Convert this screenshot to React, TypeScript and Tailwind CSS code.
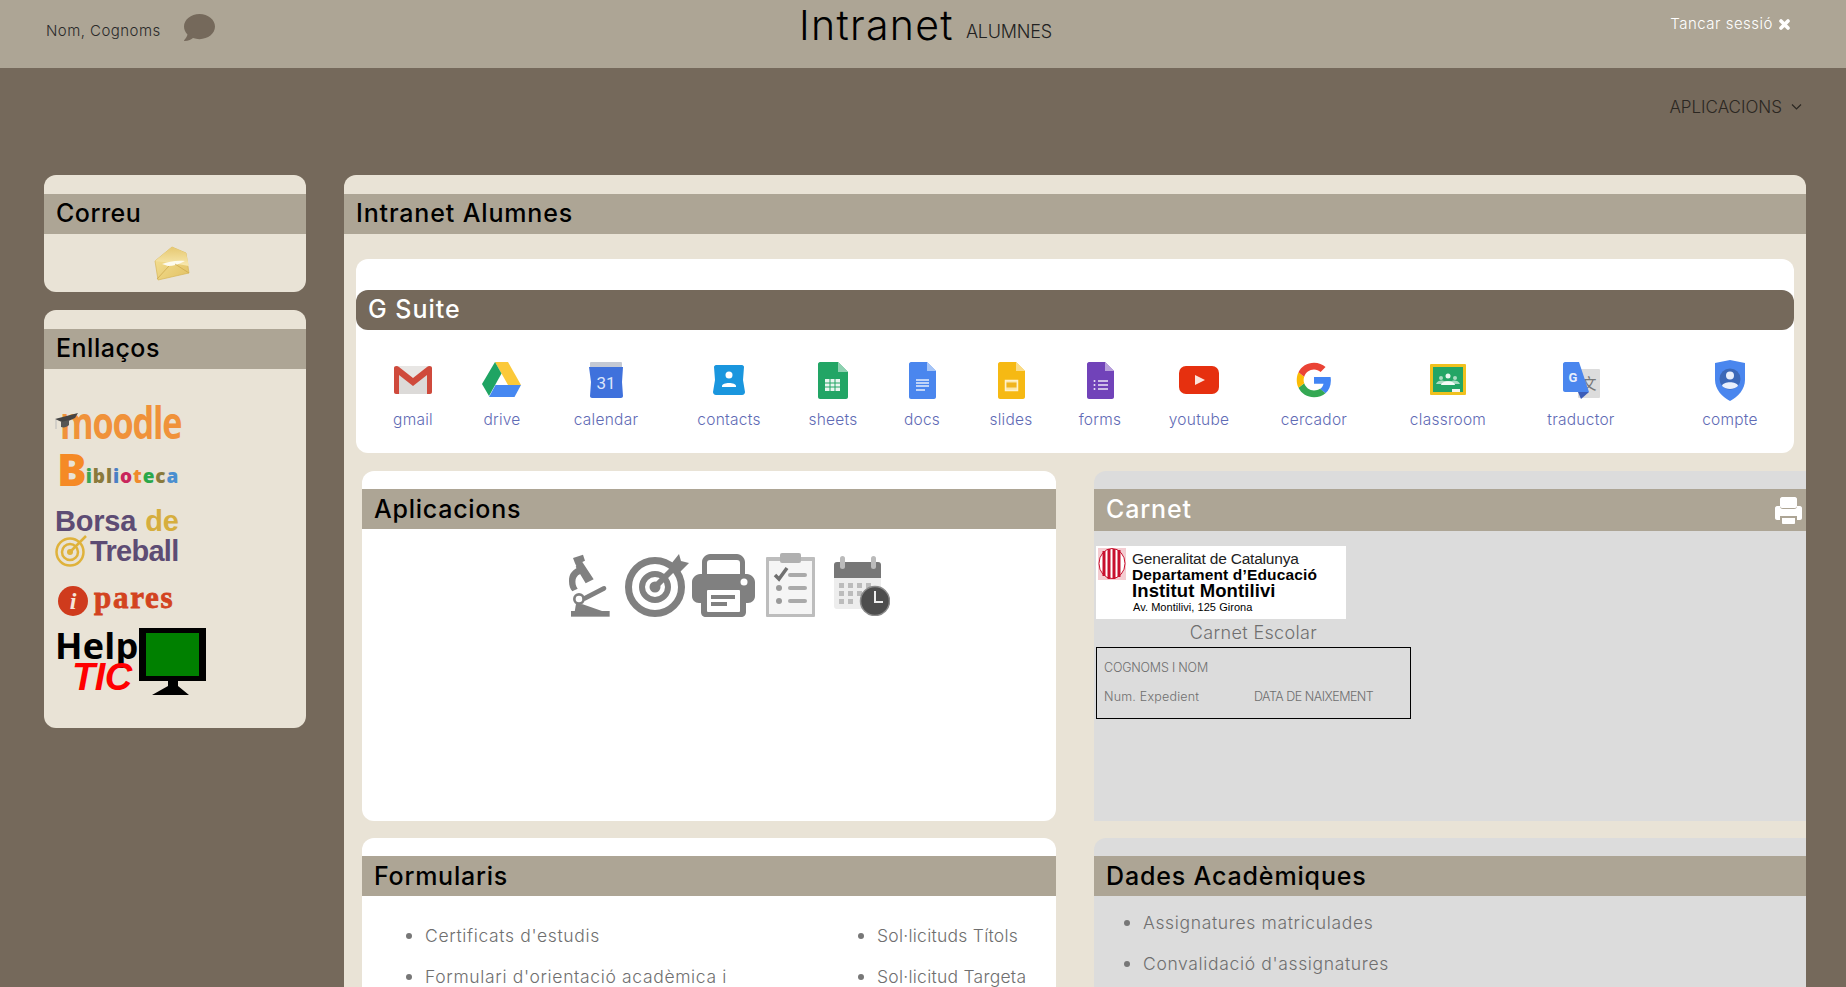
import React from "react";
import { FaComment } from "react-icons/fa";

const F = "[font-family:Inter,sans-serif]";

function Hdr({ title, track, low }: { title: string; track: string; low?: boolean }) {
  return (
    <div className={`h-[40px] bg-[#ada595] flex items-center pl-3 pr-[6px] text-[25px] font-medium text-black ${low ? "pt-[1px]" : ""}`}>
      <span className={track}>{title}</span>
    </div>
  );
}

const Gmail = () => (
  <svg width="40" height="30" viewBox="0 0 40 30">
    <rect x="1" y="1" width="38" height="28" rx="2" fill="#e8e6e4" />
    <path d="M6 29V9l14 11L34 9v20" fill="#dcdad8" />
    <path d="M1 3c0-2 3-3 5-1l14 11L34 2c2-2 5-1 5 1v24c0 1-1 2-2 2h-3V10L20 21 6 10v19H3c-1 0-2-1-2-2z" fill="#cf4a3c" />
  </svg>
);
const Drive = () => (
  <svg width="40" height="36" viewBox="0 0 40 36">
    <path d="M13 0h13l13 23H26z" fill="#fbc93a" />
    <path d="M13 0l6.500 11.500L7 34 0 22z" fill="#1fa463" />
    <path d="M7 35l6.500-12H39l-6.500 12z" fill="#4688f1" />
  </svg>
);
const Calendar = () => (
  <svg width="34" height="36" viewBox="0 0 34 36">
    <rect x="1" y="0" width="32" height="10" rx="1" fill="#c4c9d4" />
    <path d="M0 5h34l-1 15 1 14c0 1-1 2-2 2H3c-1 0-2-1-2-2l1-14z" fill="#3f71dc" />
    <text x="17" y="27" textAnchor="middle" fontSize="17" fill="#dbe5fa" fontFamily="Roboto, sans-serif">31</text>
  </svg>
);
const Contacts = () => (
  <svg width="32" height="30" viewBox="0 0 32 30">
    <path d="M3 0h26c1 0 2 1 2 2l-1 13 2 12c0 1-1 3-3 3H3c-2 0-3-2-3-3l2-12L1 2c0-1 1-2 2-2z" fill="#1a96de" />
    <circle cx="16" cy="10" r="3.500" fill="#fff" />
    <path d="M9 21c0-4 14-4 14 0v1H9z" fill="#fff" />
  </svg>
);
function Doc({ c, fold, children }: { c: string; fold: string; children: React.ReactNode }) {
  return (
    <svg width="27" height="37" viewBox="0 0 27 37">
      <path d="M2 0h16l9 9v26c0 1-1 2-2 2H2c-1 0-2-1-2-2V2c0-1 1-2 2-2z" fill={c} />
      <path d="M18 0l9 9h-9z" fill={fold} />
      {children}
    </svg>
  );
}
const Sheets = () => (
  <svg width="30" height="37" viewBox="0 0 30 37">
    <path d="M2 0h18l10 10v25c0 1-1 2-2 2H2c-1 0-2-1-2-2V2c0-1 1-2 2-2z" fill="#22a565" />
    <path d="M20 0l10 10H20z" fill="#8ed1b1" />
    <path d="M7 17h15v12H7z" fill="#e9f6ef" />
    <path d="M7 21h15M7 25h15M12 17v12M17 17v12" stroke="#22a565" strokeWidth="1" />
  </svg>
);
const Docs = () => (
  <Doc c="#4a86ee" fold="#a6c5f7">
    <path d="M7 18h13M7 21h13M7 24h13M7 28h9" stroke="#e6eefc" strokeWidth="1.500" />
  </Doc>
);
const Slides = () => (
  <Doc c="#f6b913" fold="#fadc88">
    <rect x="7.500" y="18.500" width="12" height="10" fill="#fbe6a8" stroke="#fff2cc" strokeWidth="1.500" />
    <rect x="8.500" y="20.500" width="10" height="5" fill="#f0b41f" />
  </Doc>
);
const Forms = () => (
  <Doc c="#7143b9" fold="#b9a1dc">
    <path d="M11 19h10M11 23h10M11 27h10" stroke="#ece6f6" strokeWidth="1.500" />
    <circle cx="7.500" cy="19" r="1" fill="#ece6f6" />
    <circle cx="7.500" cy="23" r="1" fill="#ece6f6" />
    <circle cx="7.500" cy="27" r="1" fill="#ece6f6" />
  </Doc>
);
const Youtube = () => (
  <svg width="40" height="28" viewBox="0 0 40 28">
    <rect width="40" height="28" rx="7" fill="#e6300f" />
    <path d="M16 9l10 5-10 5z" fill="#fbe3dc" />
  </svg>
);
const Google = () => (
  <svg width="36" height="36" viewBox="0 0 48 48">
    <path d="M46.500 24.500c0-1.600-.1-3.100-.4-4.500H24v9h12.700c-.6 2.900-2.200 5.400-4.700 7l7.300 5.700c4.300-4 7.200-9.900 7.200-17.200z" fill="#4285f4" />
    <path d="M24 47c6.200 0 11.400-2 15.300-5.500l-7.300-5.700c-2.100 1.400-4.800 2.200-8 2.200-6.100 0-11.200-4.100-13.100-9.600l-7.600 5.900C7 42 15 47 24 47z" fill="#34a853" />
    <path d="M10.900 28.400c-1-2.900-1-6 0-8.900l-7.600-5.900c-3.100 6.200-3.100 14.500 0 20.700z" fill="#fbbc05" />
    <path d="M24 10c3.400 0 6.400 1.200 8.800 3.400l6.600-6.600C35.400 3.100 30.200 1 24 1 15 1 7 6 3.300 13.600l7.600 5.900C12.800 14.100 17.900 10 24 10z" fill="#ea4335" />
  </svg>
);
const Classroom = () => (
  <svg width="36" height="32" viewBox="0 0 36 32">
    <rect width="36" height="31" rx="1" fill="#f0c11e" />
    <rect x="3" y="3" width="30" height="25" fill="#23a565" />
    <circle cx="18" cy="12" r="2.500" fill="#e9f6ef" />
    <circle cx="11" cy="14" r="2" fill="#a8dcc1" />
    <circle cx="25" cy="14" r="2" fill="#a8dcc1" />
    <path d="M6 20c1-4 7-4 8-3h8c1-1 7-1 8 3z" fill="#a8dcc1" />
    <path d="M11 21c1-5 13-5 14 0z" fill="#f4fbf7" />
    <rect x="22" y="25" width="8" height="3" fill="#f5f5f0" />
  </svg>
);
const Translate = () => (
  <svg width="37" height="37" viewBox="0 0 37 37">
    <rect x="15" y="7" width="22" height="29" rx="1" fill="#dcdcdc" />
    <text x="26" y="27" textAnchor="middle" fontSize="15" fill="#777" fontFamily="'Noto Sans CJK SC', sans-serif">文</text>
    <path d="M2 0h14l10 30H2c-1 0-2-1-2-2V2c0-1 1-2 2-2z" fill="#4a86ee" />
    <path d="M15 30h11l-8 7z" fill="#3b5cb8" />
    <text x="10" y="20" textAnchor="middle" fontSize="13" fontWeight="700" fill="#e8effc" fontFamily="Roboto, sans-serif">G</text>
  </svg>
);
const Compte = () => (
  <svg width="30" height="41" viewBox="0 0 30 41">
    <path d="M15 0l15 3v17c0 9-7 17-15 21C7 37 0 29 0 20V3z" fill="#4a86ee" />
    <circle cx="15" cy="19" r="10.500" fill="#3b68b8" />
    <circle cx="15" cy="15.500" r="4" fill="#e8effc" />
    <path d="M7 26c1-5 15-5 16 0-4 4-12 4-16 0z" fill="#e8effc" />
  </svg>
);

const apps: [string, React.ReactNode][] = [
  ["gmail", <Gmail />],
  ["drive", <Drive />],
  ["calendar", <Calendar />],
  ["contacts", <Contacts />],
  ["sheets", <Sheets />],
  ["docs", <Docs />],
  ["slides", <Slides />],
  ["forms", <Forms />],
  ["youtube", <Youtube />],
  ["cercador", <Google />],
  ["classroom", <Classroom />],
  ["traductor", <Translate />],
  ["compte", <Compte />],
];

const Envelope = () => (
  <svg width="36" height="36" viewBox="0 0 36 36">
    <defs>
      <linearGradient id="env" x1="0" y1="0" x2="1" y2="1">
        <stop offset="0" stopColor="#f6e39a" />
        <stop offset="1" stopColor="#e2c163" />
      </linearGradient>
      <linearGradient id="fl" x1="0" y1="0" x2="0" y2="1">
        <stop offset="0" stopColor="#e6c871" />
        <stop offset="1" stopColor="#f8e9b0" />
      </linearGradient>
    </defs>
    <path d="M1 15L18 1l14 6 3 20-31 7z" fill="url(#env)" stroke="#d7b658" strokeWidth="0.700" />
    <path d="M1 15L18 1l14 6 3 13-17-3z" fill="url(#fl)" />
    <path d="M8 18c6-2 14-4 23-3-5 3-12 5-17 5z" fill="#fdfbef" />
    <path d="M3 33l12-13M35 27L21 18" stroke="#cda94e" strokeWidth="0.800" fill="none" />
  </svg>
);

const Moodle = () => (
  <div className="relative h-[35px] w-[126px] ml-[11px]">
    <span className="absolute left-[5px] top-0 origin-left scale-x-[0.76] [font-family:'Open_Sans',sans-serif] text-[45px] leading-[33px] font-bold text-[#f0923a] tracking-[-1.500px] whitespace-nowrap">moodle</span>
    <svg className="absolute left-0 top-[8px]" width="24" height="18" viewBox="0 0 24 18">
      <path d="M0 6L23 0l-3 5-11 5z" fill="#444" />
      <path d="M6 9v5c3 1 6 0 8-2V7z" fill="#555" />
      <path d="M1 7v9" stroke="#bbb" strokeWidth="1" />
    </svg>
  </div>
);
const Biblioteca = () => {
  const l: [string, string][] = [["i", "#3aa655"], ["b", "#8a7a3c"], ["l", "#8a7a3c"], ["i", "#4a7fc4"], ["o", "#c9265c"], ["t", "#f08a2c"], ["e", "#2aa84a"], ["c", "#8a7a3c"], ["a", "#4a8fd0"]];
  return (
    <div className="flex items-end h-[33px] ml-[13px] mt-[13px] [font-family:'Open_Sans',sans-serif] font-extrabold whitespace-nowrap">
      <span className="text-[#f58a26] text-[44px] leading-[33px] tracking-[-1px]">B</span>
      {l.map(([c, col], i) => (
        <span key={i} style={{ color: col }} className="text-[19px] leading-[19px] tracking-[0.9px]">{c}</span>
      ))}
    </div>
  );
};
const Borsa = () => (
  <div className="ml-[11px] mt-[20px] h-[61px] [font-family:'Liberation_Sans',sans-serif] font-bold text-[#5d4c74] text-[29px] leading-[30px] whitespace-nowrap">
    <div className="flex justify-between w-[124px] h-[28px]">
      <span className="tracking-[-0.2px]">Borsa</span>
      <span className="text-[#d6ae3e]">de</span>
    </div>
    <div className="flex items-center">
      <svg width="33" height="33" viewBox="0 0 33 33" className="shrink-0">
        <circle cx="15" cy="18" r="13.500" fill="none" stroke="#dfb23b" strokeWidth="2.500" />
        <circle cx="15" cy="18" r="8" fill="none" stroke="#dfb23b" strokeWidth="2.500" />
        <circle cx="15" cy="18" r="3" fill="#dfb23b" />
        <path d="M15 18L31 2" stroke="#dfb23b" strokeWidth="2.500" />
      </svg>
      <span className="tracking-[-0.7px] ml-[2px]">Treball</span>
    </div>
  </div>
);
const Pares = () => (
  <div className="flex items-center h-[30px] ml-[14px] mt-[19px] whitespace-nowrap">
    <span className="w-[30px] h-[30px] rounded-full bg-[#cf3b1d] flex items-center justify-center text-[#f6e6da] [font-family:'Liberation_Serif',serif] font-bold italic text-[24px]">i</span>
    <span className="[font-family:'Liberation_Serif',serif] font-bold text-[#d3431f] [-webkit-text-stroke:0.8px_#d3431f] text-[31px] leading-[24px] ml-[6px] mb-[6px] tracking-[1.700px]">pares</span>
  </div>
);
const HelpTic = () => (
  <div className="relative h-[67px] w-[152px] ml-[11px] mt-[12px]">
    <span className="absolute left-0 top-[-2px] [font-family:'Open_Sans',sans-serif] font-bold text-[36px] leading-[40px] tracking-[0.2px] text-black">Help</span>
    <span className="absolute left-[17px] top-[30px] [font-family:'Liberation_Sans',sans-serif] font-bold italic text-[38px] leading-[38px] text-[#ff0000] tracking-[-0.5px]">TIC</span>
    <svg className="absolute left-[84px] top-0" width="67" height="67" viewBox="0 0 67 67">
      <rect width="67" height="53" fill="#000" />
      <rect x="7" y="5" width="53" height="43" fill="#008000" />
      <path d="M29 53h10v5l11 9H13l16-9z" fill="#000" />
    </svg>
  </div>
);

const GenLogo = () => (
  <div className="bg-white w-[250px] h-[73px] ml-[2px] mt-[15px] flex [font-family:'Liberation_Sans',sans-serif] text-black">
    <svg className="ml-[2px] mt-[2px] shrink-0" width="28" height="32" viewBox="0 0 28 32">
      <rect width="28" height="32" fill="#f4cdd2" />
      <ellipse cx="14" cy="15.500" rx="13" ry="15" fill="#fff" stroke="#c8102e" />
      <path d="M6 3v25M11 1v30M16 1v30M21 2v27" stroke="#c8102e" strokeWidth="3" />
    </svg>
    <div className="ml-[6px] pt-[4px] whitespace-nowrap">
      <div className="text-[15.500px] leading-[17px] tracking-[-0.2px] text-[#222]">Generalitat de Catalunya</div>
      <div className="text-[15.500px] leading-[15px] font-bold tracking-[0.15px]">Departament d’Educació</div>
      <div className="text-[18.500px] leading-[18px] font-bold tracking-[0.1px]">Institut Montilivi</div>
      <div className="text-[11px] leading-[14px] ml-[1px] tracking-[0.05px]">Av. Montilivi, 125 Girona</div>
    </div>
  </div>
);

const Micro = () => (
  <svg width="42" height="64" viewBox="0 0 126 192" fill="#808080">
    <path d="M15 15L45 5l6 18-8 4 34 52-24 12-30-50 2-2-4-8z" />
    <path d="M38 40C15 48 2 62 3 85c0 14 4 24 10 30l16-8c-6-7-8-18-6-28 2-10 10-16 22-20z" />
    <circle cx="33" cy="138" r="14" fill="none" stroke="#808080" strokeWidth="8" />
    <path d="M50 136L108 106" fill="none" stroke="#808080" strokeWidth="14" strokeLinecap="round" />
    <path d="M24 152l20 2 58 20v2H20z" />
    <rect x="9" y="174" width="116" height="17" />
  </svg>
);
const Target = () => (
  <svg width="64" height="64" viewBox="0 0 64 64" fill="none" stroke="#808080">
    <circle cx="30" cy="34" r="26.500" strokeWidth="7" />
    <circle cx="30" cy="34" r="13" strokeWidth="6" />
    <circle cx="30" cy="34" r="5.500" fill="#808080" stroke="none" />
    <path d="M28 36L52 12" strokeWidth="6" />
    <path d="M46 11l8-10 2 7 8 2-9 9-7-1z" fill="#808080" stroke="none" />
  </svg>
);
const Printer = () => (
  <svg width="63" height="63" viewBox="0 0 63 63">
    <path d="M10 30V8c0-4 4-8 8-8h27c4 0 8 4 8 8v22h-5V9c0-2-1-3-3-3H18c-2 0-3 1-3 3v21z" fill="#808080" />
    <path d="M8 20h47c4 0 8 4 8 8v14c0 4-3 7-7 7h-2v9c0 3-2 5-5 5H14c-3 0-5-2-5-5v-9H7c-4 0-7-3-7-7V28c0-4 4-8 8-8z" fill="#808080" />
    <rect x="15" y="36" width="33" height="22" rx="1" fill="#fff" />
    <rect x="19" y="41" width="24" height="4" fill="#808080" />
    <rect x="19" y="48" width="16" height="4" fill="#808080" />
    <circle cx="52" cy="28" r="3.500" fill="#fff" />
  </svg>
);
const Clip = () => (
  <svg width="49" height="64" viewBox="0 0 49 64">
    <rect x="0" y="4" width="49" height="60" rx="1" fill="#bdbdbd" />
    <rect x="3" y="8" width="43" height="53" fill="#f5f5f5" />
    <rect x="14" y="0" width="21" height="10" rx="2" fill="#b0b0b0" />
    <path d="M9 22l4 4 8-11" fill="none" stroke="#707070" strokeWidth="3.500" />
    <circle cx="13" cy="35" r="3" fill="#9a9a9a" />
    <circle cx="13" cy="48" r="3" fill="#9a9a9a" />
    <rect x="22" y="20" width="19" height="4" rx="2" fill="#aaa" />
    <rect x="22" y="33" width="19" height="4" rx="2" fill="#aaa" />
    <rect x="22" y="46" width="19" height="4" rx="2" fill="#aaa" />
  </svg>
);
const Cal = () => (
  <svg width="56" height="60" viewBox="0 0 56 60">
    <rect x="0" y="6" width="47" height="47" rx="3" fill="#ededed" />
    <path d="M0 22V9c0-2 1-3 3-3h41c2 0 3 1 3 3v13z" fill="#777" />
    <rect x="6" y="0" width="5" height="13" rx="2.500" fill="#bbb" />
    <rect x="37" y="0" width="5" height="13" rx="2.500" fill="#bbb" />
    <path d="M5 27h5v5H5zM14 27h5v5h-5zM23 27h5v5h-5zM32 27h5v5h-5zM5 35h5v5H5zM14 35h5v5h-5zM23 35h5v5h-5zM5 43h5v5H5zM14 43h5v5h-5z" fill="#bcbcbc" />
    <circle cx="41" cy="45" r="14.500" fill="#4d4d4d" stroke="#8a8a8a" strokeWidth="1.500" />
    <path d="M41 35v11h8" fill="none" stroke="#eee" strokeWidth="2" />
  </svg>
);
const PrintWhite = () => (
  <svg width="27" height="27" viewBox="0 0 27 27" fill="#fff">
    <path d="M7 0h13c1 0 2 1 2 2v7c0 1-1 2-2 2H7c-1 0-2-1-2-2V2c0-1 1-2 2-2z" />
    <path d="M2 9h3c0 2 1 3 3 3h11c2 0 3-1 3-3h3c1 0 2 1 2 2v10c0 1-1 2-2 2h-3v-4H5v4H2c-1 0-2-1-2-2V11c0-1 1-2 2-2z" />
    <path d="M7 21h13v5c0 .500-.500 1-1 1H8c-.500 0-1-.500-1-1z" />
  </svg>
);
const CloseX = () => (
  <svg width="11" height="11" viewBox="0 0 11 11" className="ml-[6px]" fill="none" stroke="#fff" strokeWidth="3.600" strokeLinecap="round">
    <path d="M2 2l7 7M9 2l-7 7" />
  </svg>
);

const Li = ({ children }: { children: React.ReactNode }) => (
  <li className="relative h-[41px] leading-[41px] whitespace-nowrap before:content-[''] before:absolute before:left-[-19px] before:top-[18px] before:w-[6px] before:h-[6px] before:rounded-full before:bg-[#777]">
    {children}
  </li>
);

export default function App() {
  return (
    <div className={`h-screen overflow-hidden bg-[#75695b] ${F}`}>
      <header className="h-[68px] bg-[#ada595] relative flex items-start justify-between">
        <div className="flex items-start pl-[46px]">
          <span className="mt-[21px] text-[15px] leading-[20px] font-light text-[#2a2a2a] tracking-[0.45px]">Nom, Cognoms</span>
          <FaComment className="ml-[23px] mt-[12px] text-[#75695b] text-[31px]" />
        </div>
        <div className="absolute left-[799px] top-[0px] flex items-baseline text-black whitespace-nowrap">
          <span className="text-[41px] leading-[50px] font-light tracking-[1.300px]">Intranet</span>
          <span className="ml-[12px] text-[18px] font-light text-[#222] tracking-[-0.2px] -translate-y-[2px]">ALUMNES</span>
        </div>
        <div className="flex items-center mt-[14px] pr-[56px] text-white text-[15px] leading-[20px] font-light">
          <span className="tracking-[0.5px]">Tancar sessió</span>
          <CloseX />
        </div>
      </header>

      <nav className="h-[107px] flex justify-end pr-[44px] pt-[28px] text-[#2b2722] text-[17px] leading-[22px] font-light">
        <span>APLICACIONS</span>
        <svg className="ml-[9px] mt-[7px]" width="11" height="8" viewBox="0 0 11 8" fill="none" stroke="#2b2722" strokeWidth="1.200">
          <path d="M1 1.500l4.500 4.500L10 1.500" />
        </svg>
      </nav>

      <div className="flex items-start pl-[44px] pr-[40px]">
        <aside className="w-[262px] shrink-0 flex flex-col gap-[18px]">
          <section className="bg-[#e9e3d6] rounded-[12px] pt-[19px] h-[117px]">
            <Hdr title="Correu" track="tracking-[0.5px]" />
            <div className="flex justify-center pt-[12px] pr-[7px]">
              <Envelope />
            </div>
          </section>
          <section className="bg-[#e9e3d6] rounded-[12px] pt-[19px] h-[418px]">
            <Hdr title="Enllaços" track="tracking-[0.5px]" />
            <div className="pt-[36px]">
              <Moodle />
              <Biblioteca />
              <Borsa />
              <Pares />
              <HelpTic />
            </div>
          </section>
        </aside>

        <main className="ml-[38px] flex-1 bg-[#e9e3d6] rounded-t-[12px] pt-[19px] h-[812px]">
          <Hdr title="Intranet Alumnes" track="tracking-[0.85px]" />

          <section className="mx-[12px] mt-[25px] h-[194px] bg-white rounded-[12px] pt-[31px] mb-[18px]">
            <div className="h-[40px] bg-[#75695b] rounded-[12px] flex items-center px-3 text-white text-[25px] font-medium tracking-[1px]">G Suite</div>
            <div className="grid grid-cols-[114px_64px_144px_102px_106px_72px_106px_72px_126px_104px_164px_102px_162px] pt-[30px]">
              {apps.map(([name, ic], i) => (
                <div key={name} className={`flex flex-col items-center ${i === 12 ? "pl-[34px]" : ""}`}>
                  <div className="h-[40px] flex items-center justify-center">{ic}</div>
                  <span className="mt-[10px] text-[15.500px] leading-[20px] font-light text-[#5f6bb5] tracking-[0.25px]">{name}</span>
                </div>
              ))}
            </div>
          </section>

          <div className="grid grid-cols-[694px_1fr] gap-x-[38px] gap-y-[17px] pl-[18px]">
            <section className="h-[350px] bg-white rounded-[12px] pt-[18px]">
              <Hdr title="Aplicacions" track="tracking-[0.75px]" low />
              <div className="flex items-start pl-[206px] pt-[24px]">
                <Micro />
                <div className="ml-[15px]"><Target /></div>
                <div className="ml-[3px] mt-[1px]"><Printer /></div>
                <div className="ml-[11px]"><Clip /></div>
                <div className="ml-[19px] mt-[3px]"><Cal /></div>
              </div>
            </section>

            <section className="h-[350px] bg-[#dcdcdc] rounded-tl-[12px] pt-[18px]">
              <div className="h-[42px] bg-[#ada595] flex items-center justify-between pl-3 pr-[4px] text-[25px] font-medium tracking-[0.85px] text-white">
                <span>Carnet</span>
                <PrintWhite />
              </div>
              <GenLogo />
              <div className="w-[319px] text-center text-[18px] leading-[28px] font-light text-[#6f6f6f] tracking-[0.35px]">Carnet Escolar</div>
              <div className="ml-[2px] w-[315px] h-[72px] border-[1.500px] border-black px-[7px] pt-[10px] text-[12.500px] leading-[20px] font-light text-[#6f6f6f]">
                <div className="tracking-[-0.2px]">COGNOMS I NOM</div>
                <div className="flex mt-[9px]">
                  <span className="w-[150px] tracking-[0.2px]">Num. Expedient</span>
                  <span className="tracking-[-0.5px]">DATA DE NAIXEMENT</span>
                </div>
              </div>
            </section>

            <section className="h-[300px] bg-white rounded-[12px] pt-[18px]">
              <Hdr title="Formularis" track="tracking-[0.75px]" low />
              <div className="flex pt-[19px] pl-[63px] text-[17.500px] font-light text-[#6f6f6f]">
                <ul className="w-[452px] tracking-[0.65px]">
                  <Li>Certificats d'estudis</Li>
                  <Li>Formulari d'orientació acadèmica i</Li>
                </ul>
                <ul className="tracking-[0.25px]">
                  <Li>Sol·licituds Títols</Li>
                  <Li>Sol·licitud Targeta</Li>
                </ul>
              </div>
            </section>

            <section className="h-[300px] bg-[#dcdcdc] rounded-tl-[12px] pt-[18px]">
              <Hdr title="Dades Acadèmiques" track="tracking-[0.85px]" low />
              <ul className="pt-[6px] pl-[49px] text-[17.500px] font-light text-[#6f6f6f] tracking-[0.65px]">
                <Li>Assignatures matriculades</Li>
                <Li>Convalidació d'assignatures</Li>
              </ul>
            </section>
          </div>
        </main>
      </div>
    </div>
  );
}
